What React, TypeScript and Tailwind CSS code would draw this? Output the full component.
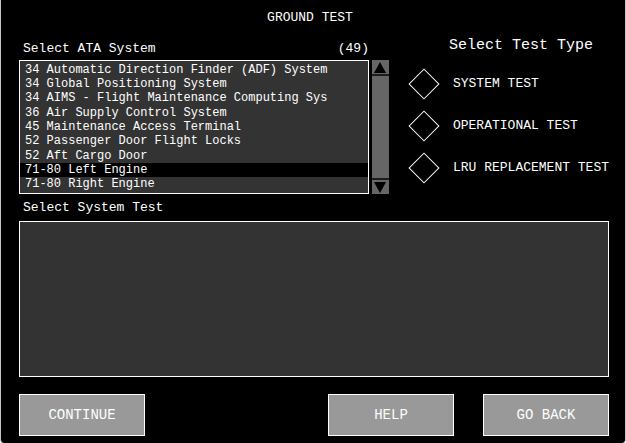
import { useState } from "react";

const systemGroups = [
  [
    "34 Automatic Direction Finder (ADF) System",
    "34 Global Positioning System",
    "34 AIMS - Flight Maintenance Computing Sys",
  ],
  [
    "36 Air Supply Control System",
    "45 Maintenance Access Terminal",
    "52 Passenger Door Flight Locks",
  ],
  ["52 Aft Cargo Door", "71-80 Left Engine", "71-80 Right Engine"],
];

const testTypes = ["SYSTEM TEST", "OPERATIONAL TEST", "LRU REPLACEMENT TEST"];

function ActionButton({ label }: { label: string }) {
  return (
    <button
      type="button"
      className="h-[42px] w-[126px] border border-white bg-[#999999] text-[14px] leading-5 text-white"
    >
      {label}
    </button>
  );
}

function SystemList() {
  const [selected, setSelected] = useState("71-80 Left Engine");
  return (
    <div
      role="listbox"
      aria-labelledby="ata-heading"
      className="flex min-w-0 flex-1 flex-col gap-px border border-white bg-[#333333] pt-[2px]"
    >
      {systemGroups.map((group) => (
        <div key={group[0]} role="group" className="flex flex-col">
          {group.map((name) => (
            <button
              key={name}
              type="button"
              role="option"
              aria-selected={name === selected}
              onClick={() => setSelected(name)}
              className={`h-[14px] pl-[5px] text-left text-[12px] leading-[14px] whitespace-nowrap ${
                name === selected ? "bg-black" : ""
              }`}
            >
              {name}
            </button>
          ))}
        </div>
      ))}
    </div>
  );
}

function ScrollBar() {
  return (
    <div className="flex w-[17px] flex-col gap-[2px] bg-[#1c1c1c]">
      <button
        type="button"
        aria-label="Scroll up"
        className="flex h-[14px] items-center justify-center bg-[#666666]"
      >
        <svg viewBox="0 0 12 11" className="h-[11px] w-[12px]">
          <path d="M6 0L12 11H0Z" fill="black" />
        </svg>
      </button>
      <div className="flex-1 bg-[#666666]" />
      <button
        type="button"
        aria-label="Scroll down"
        className="flex h-[14px] items-center justify-center bg-[#666666]"
      >
        <svg viewBox="0 0 12 11" className="h-[11px] w-[12px]">
          <path d="M0 0H12L6 11Z" fill="black" />
        </svg>
      </button>
    </div>
  );
}

export default function App() {
  return (
    <div className="min-h-screen bg-white">
      <main className="flex min-h-screen flex-col rounded-b border-x border-[#c4c4c4] bg-black pt-2 pr-4 pb-[7px] pl-[18px] font-['Liberation_Mono',monospace] text-white">
        <h1 className="pr-2 text-center text-[13px] leading-5">GROUND TEST</h1>

        <div className="flex gap-5 pt-2">
          <section className="min-w-0 flex-1 pt-[3px]">
            <div className="flex justify-between pr-5 pb-px pl-1 text-[13px] leading-5">
              <h2 id="ata-heading">Select ATA System</h2>
              <span>(49)</span>
            </div>
            <div className="flex h-[134px] gap-[3px]">
              <SystemList />
              <ScrollBar />
            </div>
          </section>

          <fieldset className="w-[200px] shrink-0">
            <legend className="pl-10 text-[15px] leading-5">
              Select Test Type
            </legend>
            <div className="flex flex-col gap-[22px] pt-[18px]">
              {testTypes.map((type) => (
                <label
                  key={type}
                  className="flex h-5 items-center gap-[18px] pl-1 text-[13px] leading-5 whitespace-nowrap"
                >
                  <input
                    type="radio"
                    name="test-type"
                    value={type}
                    className="size-[22px] shrink-0 rotate-45 appearance-none border border-white checked:bg-white"
                  />
                  {type}
                </label>
              ))}
            </div>
          </fieldset>
        </div>

        <section className="flex flex-1 flex-col pt-1">
          <h2 className="pb-[3px] pl-1 text-[13px] leading-5">
            Select System Test
          </h2>
          <div className="flex-1 border border-white bg-[#333333]" />
        </section>

        <div className="flex justify-between pt-[17px]">
          <ActionButton label="CONTINUE" />
          <div className="flex gap-[29px]">
            <ActionButton label="HELP" />
            <ActionButton label="GO BACK" />
          </div>
        </div>
      </main>
    </div>
  );
}
